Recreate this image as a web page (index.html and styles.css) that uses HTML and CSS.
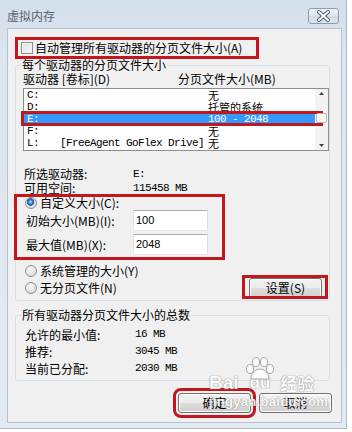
FILE: index.html
```html
<!DOCTYPE html>
<html lang="zh-CN">
<head>
<meta charset="utf-8">
<title>虚拟内存</title>
<link rel="stylesheet" href="styles.css">
</head>
<body>
<div class="window">
  <div class="titlebar">
    <span class="title">虚拟内存</span>
    <div class="close">
      <svg width="29" height="14" viewBox="0 0 29 14">
        <path d="M10 3 L19 11 M19 3 L10 11" stroke="#55606e" stroke-width="4" stroke-linecap="round"/>
        <path d="M10 3 L19 11 M19 3 L10 11" stroke="#ffffff" stroke-width="2" stroke-linecap="round"/>
      </svg>
    </div>
  </div>
  <div class="client">
    <div class="auto"><span class="checkbox"></span><span>自动管理所有驱动器的分页文件大小(A)</span></div>

    <div class="group group1">
      <div class="legend">每个驱动器的分页文件大小</div>
      <div class="list-head"><span class="col1">驱动器 [卷标](D)</span><span>分页文件大小(MB)</span></div>
      <div class="list">
        <div class="rows">
          <div class="row"><span class="drive mono"><span class="letter">C:</span></span><span class="size">无</span></div>
          <div class="row"><span class="drive mono"><span class="letter">D:</span></span><span class="size">托管的系统</span></div>
          <div class="row sel"><span class="drive mono"><span class="letter">E:</span></span><span class="size mono">100 - 2048</span></div>
          <div class="row"><span class="drive mono"><span class="letter">F:</span></span><span class="size">无</span></div>
          <div class="row"><span class="drive mono"><span class="letter">L:</span>[FreeAgent GoFlex Drive]</span><span class="size">无</span></div>
        </div>
        <div class="scrollbar">
          <svg class="arrow" width="13" height="9" viewBox="0 0 13 9"><path d="M4 6 L6.5 3 L9 6 Z" fill="#404040"/></svg>
          <div class="track"><div class="thumb"></div></div>
          <svg class="arrow" width="13" height="9" viewBox="0 0 13 9"><path d="M4 3 L6.5 6 L9 3 Z" fill="#404040"/></svg>
        </div>
      </div>

      <div class="info">
        <div class="kv"><span class="k">所选驱动器:</span><span class="mono">E:</span></div>
        <div class="kv"><span class="k">可用空间:</span><span class="mono">115458 MB</span></div>
      </div>

      <div class="custom">
        <div class="radio-row"><span class="radio checked"></span><span>自定义大小(C):</span></div>
        <div class="field field1"><span class="flabel">初始大小(MB)(I):</span><span class="input">100</span></div>
        <div class="field field2"><span class="flabel">最大值(MB)(X):</span><span class="input">2048</span></div>
      </div>

      <div class="opts">
        <div class="radios">
          <div class="radio-row"><span class="radio"></span><span>系统管理的大小(Y)</span></div>
          <div class="radio-row second"><span class="radio"></span><span>无分页文件(N)</span></div>
        </div>
        <button class="btn set">设置(S)</button>
      </div>
    </div>

    <div class="group group2">
      <div class="legend">所有驱动器分页文件大小的总数</div>
      <div class="totals">
        <div class="kv2"><span class="k2">允许的最小值:</span><span class="mono">16 MB</span></div>
        <div class="kv2"><span class="k2">推荐:</span><span class="mono">3045 MB</span></div>
        <div class="kv2"><span class="k2">当前已分配:</span><span class="mono">2030 MB</span></div>
      </div>
    </div>

    <div class="actions">
      <button class="btn ok">确定</button>
      <button class="btn">取消</button>
    </div>
  </div>

  <div class="watermark" aria-hidden="true">
    <div class="wm-top">
      <span class="wm-bai">Bai</span>
      <span class="wm-du">
        <svg class="paw" width="34" height="24" viewBox="0 0 34 24">
          <g fill="#ffffff" stroke="#9a9a9a" stroke-width="1">
            <ellipse cx="7" cy="13" rx="3.5" ry="4.5"/>
            <ellipse cx="13" cy="6" rx="3.5" ry="4.5"/>
            <ellipse cx="21" cy="6" rx="3.5" ry="4.5"/>
            <ellipse cx="27" cy="13" rx="3.5" ry="4.5"/>
            <path d="M8 23 C8 17 13 13 17 13 C21 13 26 17 26 23 Z"/>
          </g>
        </svg>du</span>
      <span class="wm-jy">经验</span>
    </div>
    <div class="wm-url">jingyan.baidu.com</div>
  </div>
</div>
</body>
</html>
```

FILE: styles.css
```css
* { box-sizing: border-box; }

html, body {
  margin: 0;
  padding: 0;
  background: #ffffff;
}

body {
  font-family: "Noto Sans CJK SC", "Noto Sans", sans-serif;
  font-size: 12px;
  line-height: 12px;
  color: #000000;
}

.window {
  position: relative;
  width: 347px;
  height: 429px;
  background: linear-gradient(#d2deea, #dce6f0 60px, #e2eaf2);
  border-right: 1px solid #aab8c8;
  border-bottom: 1px solid #aab8c8;
}

.titlebar {
  height: 28px;
  display: flex;
  justify-content: space-between;
  align-items: flex-start;
  padding: 0 7px;
}

.title {
  margin-top: 9px;
  font-size: 12px;
  line-height: 13px;
  color: #56616e;
}

.close {
  margin-top: 8px;
  width: 31px;
  height: 16px;
  border: 1px solid #8d9cae;
  border-radius: 3px;
  background: linear-gradient(#eef3f8, #dbe4ee 50%, #cfdae6 51%, #dae3ed);
}

.close svg { display: block; }

.client {
  margin-left: 7px;
  width: 335px;
  height: 395px;
  background: #f0f0f0;
  border: 1px solid #b6c2cf;
}

.mono {
  font-family: "Liberation Mono", "Noto Sans CJK SC", monospace;
  font-size: 11px;
  letter-spacing: -0.6px;
}

/* auto manage checkbox */
.auto {
  display: flex;
  align-items: center;
  gap: 2px;
  margin: 11px 0 0 10px;
  width: 238px;
  height: 16px;
  outline: 3px solid #c3171e;
}

.checkbox {
  margin-left: 3px;
  width: 12px;
  height: 12px;
  border: 1px solid #8e8f8f;
  background: linear-gradient(135deg, #dcdcdc, #fbfbfb);
  box-shadow: inset 0 0 0 1px #f4f4f4;
}

/* group boxes */
.group {
  margin-left: 7px;
  width: 315px;
  border: 1px solid #d5dfe5;
  border-radius: 3px;
}

.group1 {
  margin-top: 9px;
  padding-bottom: 2px;
}

.legend {
  width: fit-content;
  margin: -7px 0 0 5px;
  padding: 0 1px;
  background: #f0f0f0;
  line-height: 12px;
}

.list-head {
  display: flex;
  margin-top: 2px;
  padding-left: 7px;
}

.list-head .col1 { width: 155px; }

.list {
  display: flex;
  margin: 3px 0 0 7px;
  width: 306px;
  height: 63px;
  border: 1px solid #8a8d92;
  background: #ffffff;
}

.rows { flex: 1; }

.row {
  position: relative;
  display: flex;
  height: 12px;
  line-height: 12px;
}

.row .drive {
  width: 184px;
  padding-left: 3px;
  white-space: pre;
}

.row .letter {
  display: inline-block;
  width: 33px;
}

.row .size {
  font-size: 11px;
  line-height: 12px;
}

.row .size.mono { font-size: 11px; }

.row.sel {
  background: #3399ff;
  color: #ffffff;
}

.row.sel::after {
  content: "";
  position: absolute;
  left: -3px;
  right: -8px;
  top: -2px;
  bottom: -1px;
  border: 3px solid #c3171e;
}

.scrollbar {
  width: 13px;
  display: flex;
  flex-direction: column;
  background: #f3f3f3;
}

.scrollbar .arrow { display: block; }

.scrollbar .track {
  flex: 1;
  position: relative;
}

.thumb {
  margin: 15px 1px 0;
  height: 10px;
  border: 1px solid #b4b4b4;
  border-radius: 2px;
  background: #fbfbfb;
}

/* selected drive info */
.info {
  margin-top: 16px;
  padding-left: 8px;
}

.kv {
  display: flex;
  line-height: 14px;
}

.kv .k { width: 109px; }

/* custom size block */
.custom {
  margin: 1px 0 0 1px;
  width: 205px;
  height: 60px;
  padding-left: 8px;
  outline: 3px solid #c3171e;
}

.radio-row {
  display: flex;
  align-items: center;
  gap: 3px;
  height: 12px;
  margin-top: 2px;
}

.radio {
  width: 12px;
  height: 12px;
  border-radius: 50%;
  border: 1px solid #8e8f8f;
  background: radial-gradient(circle at 40% 35%, #ffffff, #d8d8d8 80%);
}

.radio.checked {
  background:
    radial-gradient(circle at 45% 40%, #b6e0ff 0, #3a8ad6 2px, #1a4f92 3.5px, transparent 4px),
    radial-gradient(circle at 40% 35%, #ffffff, #d8d8d8 80%);
}

.field {
  display: flex;
  align-items: center;
  height: 21px;
  margin-left: 1px;
}

.field1 { margin-top: 1px; }
.field2 { margin-top: 3px; }

.flabel { width: 107px; }

.input {
  width: 75px;
  height: 21px;
  border: 1px solid #abadb3;
  border-left-color: #e2e3ea;
  border-right-color: #dbdfe6;
  border-bottom-color: #e3e9ef;
  background: #ffffff;
  padding-left: 2px;
  font-family: "Liberation Sans", "Noto Sans", sans-serif;
  font-size: 11px;
  line-height: 19px;
}

.opts {
  display: flex;
  justify-content: space-between;
  padding-left: 9px;
}

.radios { padding-top: 6px; }
.radios .radio-row.second { margin-top: 5px; }

.btn {
  display: block;
  width: 73px;
  height: 20px;
  padding: 0;
  border: 1px solid #707070;
  border-radius: 3px;
  background: linear-gradient(#f2f2f2, #ebebeb 48%, #dddddd 52%, #cfcfcf);
  box-shadow: inset 0 0 0 1px #fcfcfc;
  font-family: "Noto Sans CJK SC", sans-serif;
  font-size: 12px;
  line-height: 16px;
  color: #000000;
}

.set {
  position: relative;
  margin: 21px 7px 0 0;
}

.set::after {
  content: "";
  position: absolute;
  left: -8px;
  right: -7px;
  top: -4px;
  bottom: -2px;
  border: 3px solid #c3171e;
}

.group2 {
  margin-top: 14px;
  padding-bottom: 3px;
}

.totals {
  margin-top: 5px;
  padding-left: 9px;
}

.kv2 {
  display: flex;
  line-height: 17px;
}

.kv2 .k2 { width: 110px; }

.actions {
  display: flex;
  justify-content: flex-end;
  gap: 8px;
  margin-top: 12px;
  padding-right: 9px;
}

.ok {
  outline: 3px solid #c3171e;
  outline-offset: 2px;
}

/* Baidu watermark overlay */
.watermark {
  position: absolute;
  left: 209px;
  top: 372px;
  opacity: 0.85;
  color: #ffffff;
  font-family: "Liberation Sans", "Noto Sans CJK SC", sans-serif;
  font-weight: bold;
  text-shadow: 0 0 1px #7a7a7a, 0 0 1px #7a7a7a;
  pointer-events: none;
}

.wm-top {
  display: flex;
  align-items: flex-end;
  height: 20px;
}

.wm-bai {
  font-size: 19px;
  line-height: 18px;
}

.wm-du {
  position: relative;
  margin-left: 11px;
  font-size: 17px;
  line-height: 18px;
}

.paw {
  position: absolute;
  left: -7px;
  top: -18px;
}

.wm-jy {
  margin-left: 10px;
  font-family: "Noto Sans CJK SC", sans-serif;
  font-size: 17px;
  line-height: 18px;
}

.wm-url {
  margin-top: 4px;
  font-size: 13px;
  line-height: 12px;
  letter-spacing: 0.3px;
}
```
